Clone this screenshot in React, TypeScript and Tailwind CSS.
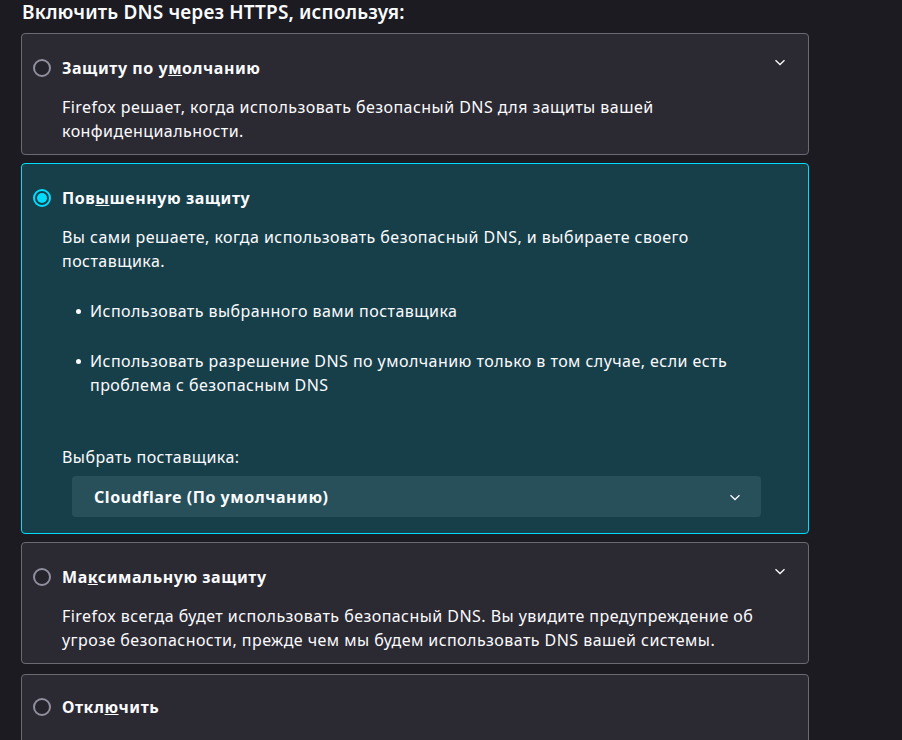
import { ReactNode } from 'react';

const font = { fontFamily: '"Noto Sans", "Open Sans", sans-serif' };

function Chevron({ className = '' }: { className?: string }) {
  return (
    <svg width="12" height="12" viewBox="0 0 12 12" className={className} fill="none">
      <path d="M1.5 4.2l4.5 4.3 4.5-4.3" stroke="#fbfbfe" strokeWidth="1.3" />
    </svg>
  );
}

function Radio({ checked }: { checked?: boolean }) {
  if (checked) {
    return (
      <span className="flex h-[18px] w-[18px] shrink-0 items-center justify-center rounded-full border-2 border-[#00ddff] bg-[#173f4a]">
        <span className="h-[10px] w-[10px] rounded-full bg-[#00ddff]" />
      </span>
    );
  }
  return <span className="h-[18px] w-[18px] shrink-0 rounded-full border-2 border-[#8f8f9d] bg-[#25242c]" />;
}

interface OptionProps {
  title: ReactNode;
  checked?: boolean;
  expandable?: boolean;
  children?: ReactNode;
  last?: boolean;
}

function Option({ title, checked, expandable, children, last }: OptionProps) {
  let cls = checked
    ? 'rounded border border-[#00ddff] bg-[#173f4a] pl-[11px] pr-3 pt-[22px] pb-[16px]'
    : 'rounded border border-[#6b6a72] bg-[#2b2a33] pl-[11px] pr-3 pt-[22px] pb-[11px]';
  if (last) cls = 'rounded border border-[#6b6a72] bg-[#2b2a33] pl-[11px] pr-3 pt-[20px] min-h-[100px]';
  return (
    <div className={cls}>
      <div className="flex items-center gap-[11px]">
        <Radio checked={checked} />
        <span className="flex-1 text-[16px] font-bold leading-6 tracking-[0.55px]">{title}</span>
        {expandable && <Chevron className="mr-[10px] -mt-3" />}
      </div>
      {children && (
        <div className="mt-[15px] pl-[29px] pr-1 text-[16px] leading-6 tracking-[0.45px]">{children}</div>
      )}
    </div>
  );
}

function Bullet({ children }: { children: ReactNode }) {
  return (
    <li className="flex gap-[9px] pl-[14px]">
      <span className="pt-[10px]">
        <span className="block h-[5px] w-[5px] rounded-full bg-[#fbfbfe]" />
      </span>
      <span>{children}</span>
    </li>
  );
}

export default function App() {
  return (
    <div className="h-[740px] overflow-hidden bg-[#1c1b22] text-[#fbfbfe]" style={font}>
      <div className="w-[809px] pl-[21px]">
        <h1 className="pl-px text-[19px] font-semibold leading-6 tracking-[0.15px]">
          Включить DNS через HTTPS, используя:
        </h1>
        <div className="mt-[9px] flex flex-col gap-2">
          <Option title={<>Защиту по у<u>м</u>олчанию</>} expandable>
            Firefox решает, когда использовать безопасный DNS для защиты вашей конфиденциальности.
          </Option>
          <Option title={<>Пов<u>ы</u>шенную защиту</>} checked>
            <p>Вы сами решаете, когда использовать безопасный DNS, и выбираете своего поставщика.</p>
            <ul className="mt-[26px] flex flex-col gap-[26px]">
              <Bullet>Использовать выбранного вами поставщика</Bullet>
              <Bullet>
                Использовать разрешение DNS по умолчанию только в том случае, если есть проблема с
                безопасным DNS
              </Bullet>
            </ul>
            <div className="mt-[48px]">Выбрать поставщика:</div>
            <div className="mt-[7px] ml-[10px] mr-[31px] flex h-[41px] items-center justify-between rounded bg-[#27505a] pl-[22px] pr-[20px]">
              <span className="font-bold tracking-[0.55px]">Cloudflare (По умолчанию)</span>
              <Chevron />
            </div>
          </Option>
          <Option title={<>Ма<u>к</u>симальную защиту</>} expandable>
            Firefox всегда будет использовать безопасный DNS. Вы увидите предупреждение об угрозе
            безопасности, прежде чем мы будем использовать DNS вашей системы.
          </Option>
          <div className="pt-[2px]">
            <Option title={<>Откл<u>ю</u>чить</>} last />
          </div>
        </div>
      </div>
    </div>
  );
}
